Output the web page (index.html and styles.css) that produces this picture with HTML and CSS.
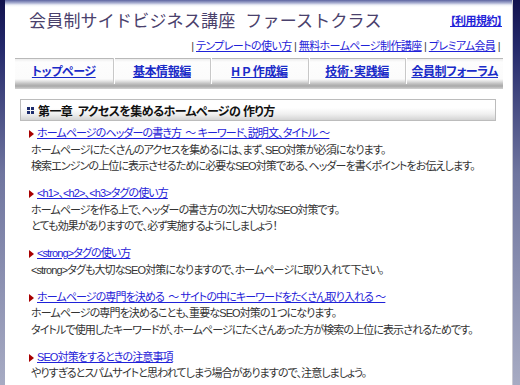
FILE: index.html
```html
<!DOCTYPE html>
<html lang="ja">
<head>
<meta charset="utf-8">
<title>会員制サイドビジネス講座 ファーストクラス</title>
<link rel="stylesheet" href="styles.css">
</head>
<body>
<div class="frame">
  <header class="top">
    <h1 class="title">会員制サイドビジネス講座&nbsp;&nbsp;ファーストクラス</h1>
    <a class="terms" href="#">【利用規約】</a>
  </header>
  <div class="sublinks">
    <span class="bar">|</span> <a href="#">テンプレートの使い方</a> <span class="bar">|</span> <a href="#">無料ホームページ制作講座</a> <span class="bar">|</span> <a href="#">プレミアム会員</a> <span class="bar">|</span>
  </div>
  <nav class="nav">
    <a class="nav-item" href="#">トップページ</a>
    <a class="nav-item" href="#">基本情報編</a>
    <a class="nav-item" href="#">H P 作成編</a>
    <a class="nav-item" href="#">技術･実践編</a>
    <a class="nav-item" href="#">会員制フォーラム</a>
  </nav>
  <section class="content">
    <h2 class="chapter">
      <svg class="chapter-icon" width="7" height="7" viewBox="0 0 7 7"><rect x="0" y="0" width="3" height="3" fill="#1e2d6e"/><rect x="4" y="0" width="3" height="3" fill="#1e2d6e"/><rect x="0" y="4" width="3" height="3" fill="#1e2d6e"/><rect x="4" y="4" width="3" height="3" fill="#1e2d6e"/></svg>
      <span>第一章&nbsp;&nbsp;アクセスを集めるホームページの 作り方</span>
    </h2>
    <ul class="items">
      <li class="item">
        <span class="arrow"></span><a class="item-link" href="#">ホームページのヘッダーの書き方&nbsp;&nbsp;～ キーワード、説明文、タイトル ～</a>
        <p class="desc">ホームページにたくさんのアクセスを集めるには、まず、SEO対策が必須になります。<br>検索エンジンの上位に表示させるために必要なSEO対策である、ヘッダーを書くポイントをお伝えします。</p>
      </li>
      <li class="item">
        <span class="arrow"></span><a class="item-link" href="#">&lt;h1&gt;、&lt;h2&gt;、&lt;h3&gt;タグの使い方</a>
        <p class="desc">ホームページを作る上で、ヘッダーの書き方の次に大切なSEO対策です。<br>とても効果がありますので、必ず実施するようにしましょう！</p>
      </li>
      <li class="item">
        <span class="arrow"></span><a class="item-link" href="#">&lt;strong&gt;タグの使い方</a>
        <p class="desc">&lt;strong&gt;タグも大切なSEO対策になりますので、ホームページに取り入れて下さい。</p>
      </li>
      <li class="item">
        <span class="arrow"></span><a class="item-link" href="#">ホームページの専門を決める&nbsp;&nbsp;～ サイトの中にキーワードをたくさん取り入れる ～</a>
        <p class="desc">ホームページの専門を決めることも、重要なSEO対策の１つになります。<br>タイトルで使用したキーワードが、ホームページにたくさんあった方が検索の上位に表示されるためです。</p>
      </li>
      <li class="item">
        <span class="arrow"></span><a class="item-link" href="#">SEO対策をするときの注意事項</a>
        <p class="desc">やりすぎるとスパムサイトと思われてしまう場合がありますので、注意しましょう。</p>
      </li>
    </ul>
  </section>
</div>
</body>
</html>
```
FILE: styles.css
```css
html {
  background: linear-gradient(to bottom, #12124e 0%, #23286a 12%, #6f759f 45%, #a7abc3 100%);
  min-height: 100%;
}
body {
  margin: 0;
  font-family: "Liberation Sans", "Noto Sans CJK JP", sans-serif;
  font-feature-settings: "palt";
  color: #333;
}
a {
  color: #1f22d8;
}
.frame {
  margin-left: 5px;
  width: 508px;
  height: 385px;
  border-right: 1px solid #c9c9d2;
  background: linear-gradient(to bottom, #5c64a0 0, #aab0d2 3px, #eef0f7 5px, #fff 7px, #fff 100%);
  box-sizing: border-box;
  overflow: hidden;
}
.top {
  display: flex;
  justify-content: space-between;
  align-items: flex-start;
  padding: 12px 10px 0 24px;
}
.title {
  margin: 0;
  font-size: 17px;
  line-height: 20px;
  font-weight: normal;
  color: #4a416c;
  font-feature-settings: normal;
  letter-spacing: 0.2px;
}
.terms {
  font-size: 11px;
  font-weight: bold;
  line-height: 14px;
  margin-top: 2px;
  letter-spacing: -0.5px;
}
.sublinks {
  text-align: right;
  font-size: 11px;
  line-height: 14px;
  padding: 7px 12px 0 0;
  color: #333;
  letter-spacing: -0.6px;
  white-space: nowrap;
}
.sublinks .bar {
  color: #444;
}
.nav {
  display: grid;
  grid-template-columns: repeat(5, 1fr);
  margin: 5px 9px 0 10px;
  height: 31px;
  background: linear-gradient(to bottom, #b9b9b9 0, #b9b9b9 1px, #ededed 1px, #fdfdfd 4px, #fbfbfb 21px, #e4e4e4 23px, #bdbdbd 26px, #a9a9a9 28px, #d2d2d2 31px);
}
.nav-item {
  display: block;
  height: 23px;
  line-height: 23px;
  padding-top: 3px;
  text-align: center;
  font-size: 12px;
  font-weight: bold;
  color: #1a2bc8;
  letter-spacing: -0.4px;
  white-space: nowrap;
  border-left: 1px solid #c8c8c8;
  box-shadow: inset 1px 0 0 #fff;
}
.nav-item:first-child {
  border-left: none;
  box-shadow: none;
}
.content {
  padding: 10px 16px 0 15px;
}
.chapter {
  display: flex;
  align-items: center;
  gap: 4px;
  margin: 0;
  height: 20px;
  padding-left: 6px;
  border: 1px solid #bcbcbc;
  background: linear-gradient(to bottom, #fff 0, #fff 40%, #f0f0f0 70%, #d4d4d4 100%);
  font-size: 12px;
  font-weight: bold;
  color: #111;
  letter-spacing: -0.6px;
  white-space: nowrap;
}
.chapter-icon {
  display: block;
  flex: none;
}
.items {
  list-style: none;
  margin: 4px 0 0;
  padding: 0 0 0 9px;
}
.item {
  margin-bottom: 10.5px;
  font-size: 11px;
  line-height: 16.5px;
  letter-spacing: -0.9px;
  white-space: nowrap;
}
.arrow {
  display: inline-block;
  width: 0;
  height: 0;
  margin-right: 3px;
  vertical-align: -1px;
  border-left: 5px solid #a80000;
  border-top: 4px solid transparent;
  border-bottom: 4px solid transparent;
}
.item-link {
  text-decoration: underline;
}
.desc {
  margin: 0;
  padding-left: 2px;
  color: #333;
}
```
